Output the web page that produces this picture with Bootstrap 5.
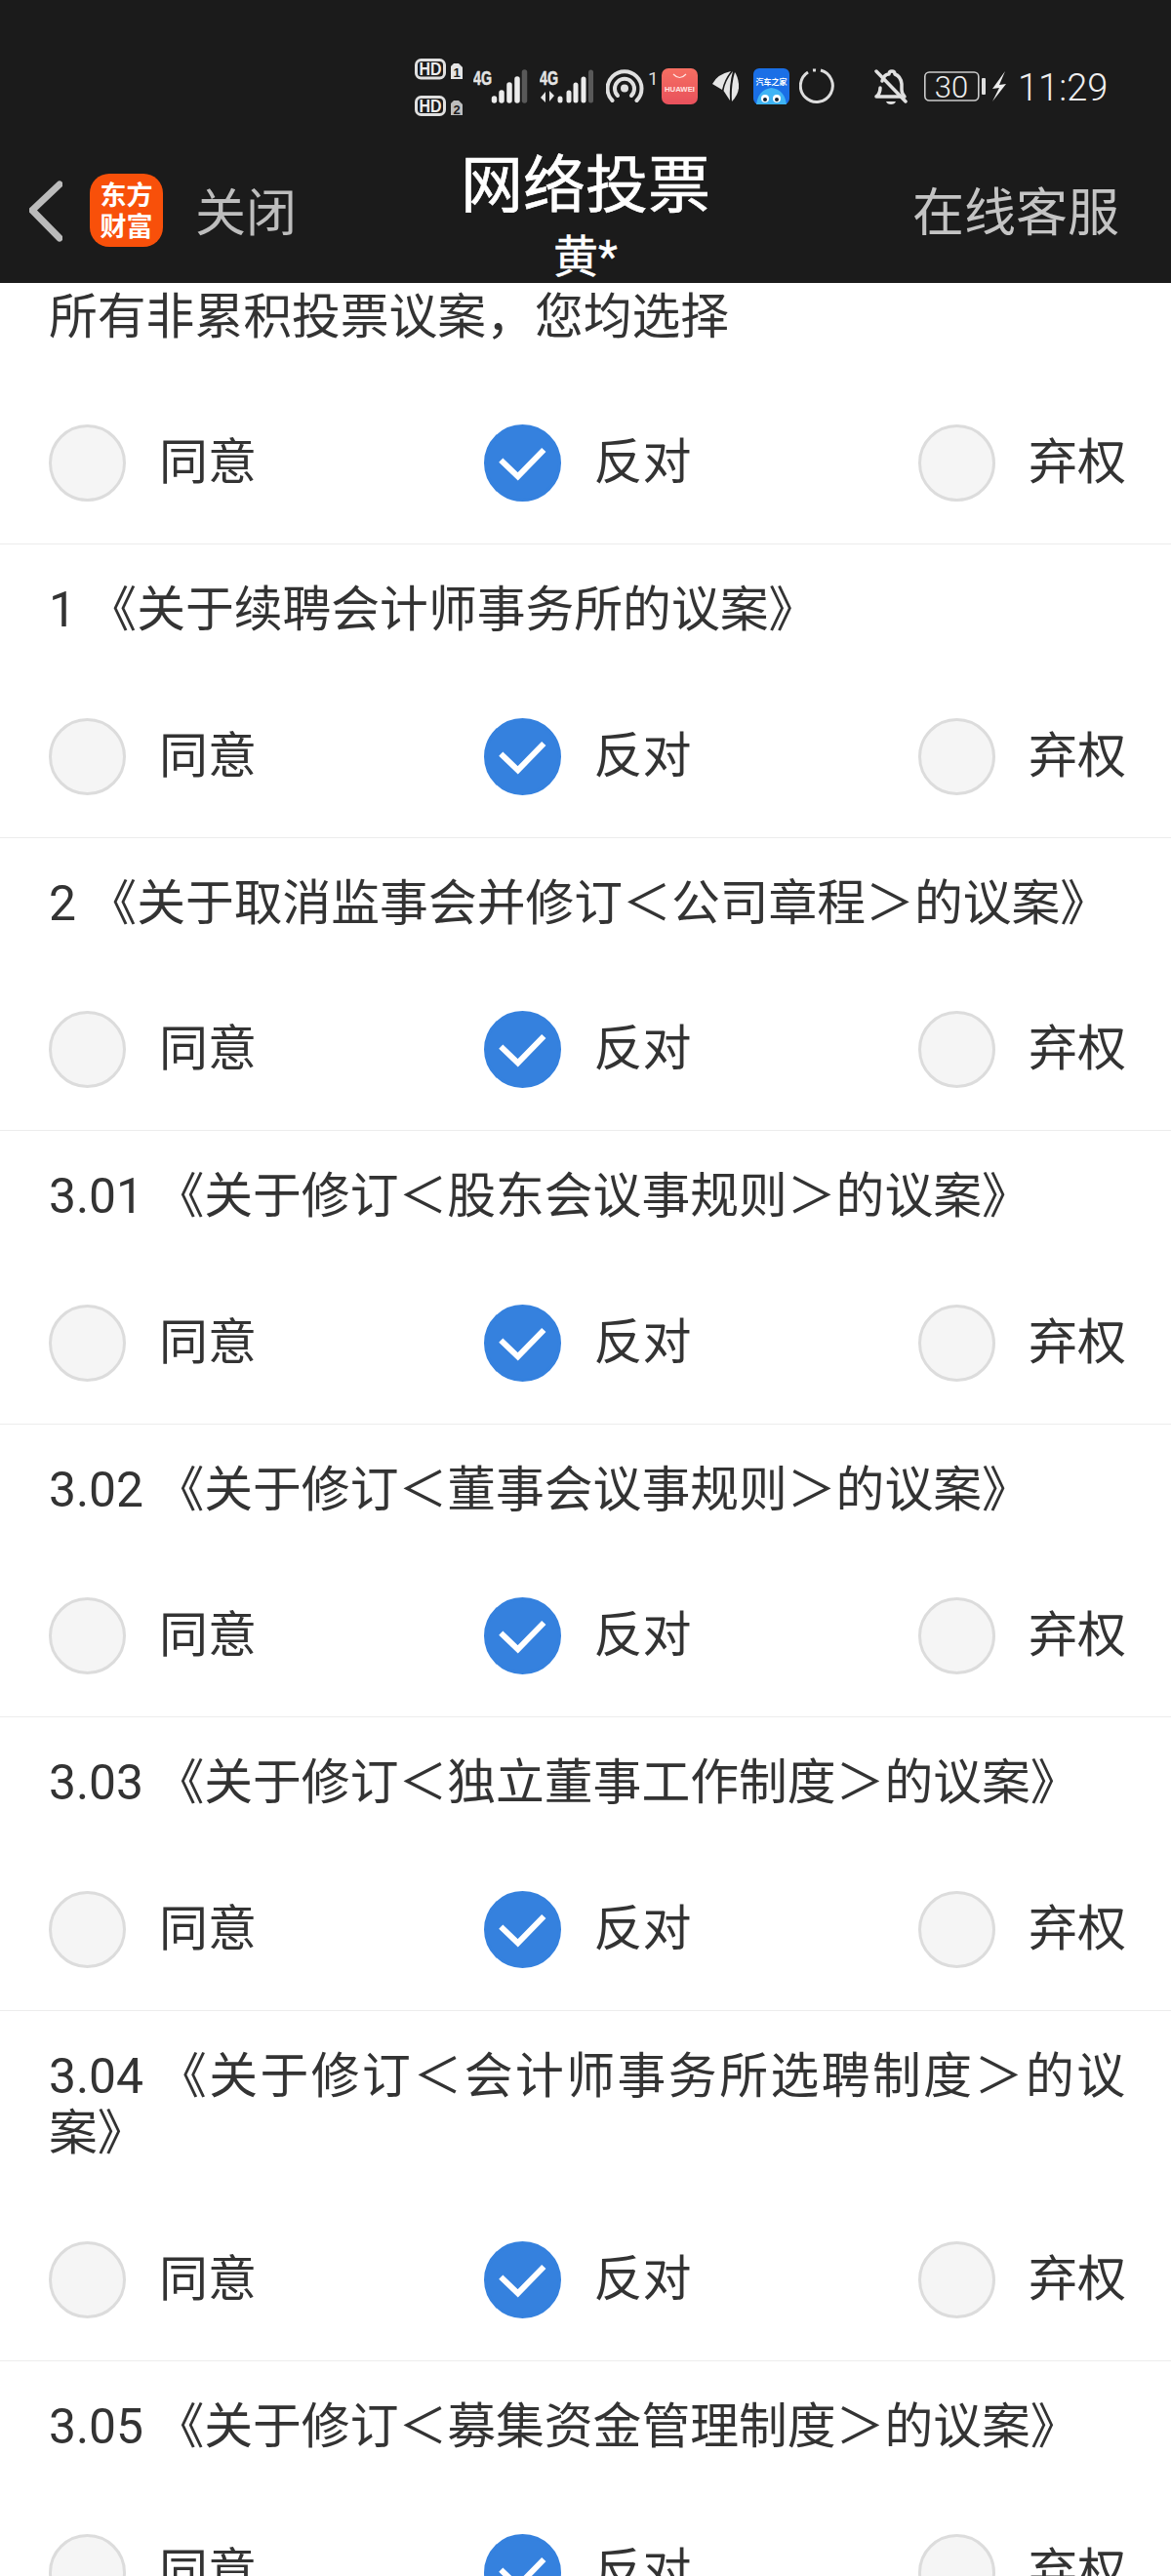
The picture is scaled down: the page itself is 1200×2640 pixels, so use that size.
<!DOCTYPE html>
<html lang="zh">

<head>
    <meta charset="UTF-8">
    <meta name="viewport" content="width=device-width, initial-scale=1.0">
    <link href="https://cdn.jsdelivr.net/npm/bootstrap@5.3.3/dist/css/bootstrap.min.css" rel="stylesheet">
    <script src="https://cdn.jsdelivr.net/npm/bootstrap@5.3.3/dist/js/bootstrap.bundle.min.js"></script>
    <title>网络投票</title>
    <style>
        html, body {
            height: 2640px;
            overflow: hidden;
        }
        body {
            font-family: Roboto, "Noto Sans CJK SC", sans-serif;
            background: #fff;
            color: #333;
        }
        .top-area {
            background: #1b1b1b;
            height: 290px;
            overflow: hidden;
        }
        .status-row {
            height: 140px;
            padding: 60px 67px 20px 0;
        }
        .status-row svg {
            height: 60px;
            display: block;
            flex: none;
        }
        .st-sig1 { width: 56px; margin-left: 11px; }
        .st-sig2 { width: 55px; margin-left: 12px; }
        .st-hot { width: 56px; margin-left: 13px; }
        .st-hw { width: 37px; margin-left: 1px; }
        .st-feather { width: 27px; margin-left: 15px; }
        .st-car { width: 37px; margin-left: 15px; }
        .st-ring { width: 36px; margin-left: 10px; }
        .st-bell { width: 34px; margin-left: 41px; }
        .st-batt { width: 63px; margin-left: 17px; }
        .st-bolt { width: 16px; margin-left: 7px; }
        .status-time {
            font-size: 38px;
            font-weight: 300;
            line-height: 60px;
            color: #eee;
            width: 90px;
            margin-left: 10px;
            white-space: nowrap;
        }
        .nav-row {
            display: grid;
            grid-template-columns: 1fr auto 1fr;
            height: 150px;
            overflow: hidden;
        }
        .nav-left {
            padding: 38px 0 0 30px;
        }
        .app-logo {
            width: 75px;
            height: 75px;
            border-radius: 20px;
            background: #f8500a;
            color: #fff;
            font-family: "Noto Sans CJK SC", sans-serif;
            font-size: 27px;
            font-weight: 700;
            line-height: 32px;
            text-align: center;
            padding-top: 5px;
            margin-left: 28px;
        }
        .nav-close {
            color: #bdbdbd;
            font-size: 52px;
            line-height: 75px;
            margin-left: 33px;
            padding-top: 4px;
        }
        .nav-title {
            color: #fff;
            text-align: center;
            padding-top: 15px;
        }
        .nav-title-main {
            font-size: 64px;
            line-height: 72px;
            -webkit-text-stroke: 0.6px #fff;
        }
        .nav-title-sub {
            font-size: 46px;
            line-height: 52px;
            margin-top: 10px;
            -webkit-text-stroke: 0.4px #fff;
        }
        .nav-service {
            color: #c4c4c4;
            font-size: 53px;
            line-height: 75px;
            text-align: right;
            padding: 42px 53px 0 0;
        }
        .vote-row {
            padding: 38.2px 47px 43px 50px;
            border-bottom: 1px solid #ececec;
        }
        .vote-row.first-row {
            padding-top: 5.9px;
        }
        .vote-title {
            font-size: 49.8px;
            line-height: 58.5px;
            margin-bottom: 80.8px;
            text-align: justify;
        }
        .vote-options {
            display: grid;
            grid-template-columns: 445.5px 445.5px 1fr;
        }
        .radio-dot {
            width: 79px;
            height: 79px;
            border-radius: 50%;
            background: #f5f5f5;
            border: 3px solid #dcdcdc;
            flex: none;
        }
        .radio-dot.checked {
            background: #3581de;
            border-color: #3581de;
        }
        .radio-dot svg {
            display: block;
            margin: -3px;
        }
        .vote-label {
            font-size: 50px;
            line-height: 79px;
            margin-left: 34px;
            white-space: nowrap;
        }
    </style>
</head>

<body>
    <div class="top-area">
        <div class="status-row d-flex justify-content-end">
            <svg width="49" viewBox="426 60 49 60">
                <g font-family="Liberation Sans, sans-serif" font-weight="700" text-anchor="middle">
                    <rect x="427.500" y="61.500" width="29" height="18.500" rx="5" fill="#1b1b1b" stroke="#e0e0e0" stroke-width="3"/>
                    <text x="442" y="77" font-size="18" fill="#eee" textLength="23" lengthAdjust="spacingAndGlyphs">HD</text>
                    <rect x="427.500" y="99.500" width="29" height="18" rx="5" fill="#1b1b1b" stroke="#e0e0e0" stroke-width="3"/>
                    <text x="442" y="115" font-size="18" fill="#eee" textLength="23" lengthAdjust="spacingAndGlyphs">HD</text>
                    <path d="M466 65h5l4 4v12h-12v-13z" fill="#e4e4e4"/>
                    <text x="469" y="79" font-size="13" fill="#1b1b1b">1</text>
                    <path d="M466 103h5l4 4v11h-12v-12z" fill="#bdbdbd"/>
                    <text x="469" y="116.500" font-size="13" fill="#1b1b1b">2</text>
                </g>
            </svg>
            <svg class="st-sig1" viewBox="487 60 56 60">
                <text x="487" y="87" font-family="Liberation Sans, sans-serif" font-weight="700" font-size="20" fill="#e4e4e4" stroke="#e4e4e4" stroke-width="0.500" textLength="19" lengthAdjust="spacingAndGlyphs">4G</text>
                <g stroke="#ececec" stroke-width="5.500" stroke-linecap="round">
                    <path d="M508.500 101v2M516 95v8M524 87v16M532 81v22"/>
                    <path d="M539.500 74v29" stroke="#595959"/>
                </g>
            </svg>
            <svg class="st-sig2" viewBox="554 60 55 60">
                <text x="554" y="87" font-family="Liberation Sans, sans-serif" font-weight="700" font-size="20" fill="#e4e4e4" stroke="#e4e4e4" stroke-width="0.500" textLength="19" lengthAdjust="spacingAndGlyphs">4G</text>
                <path d="M555 100l5-6v11zM569 98l-5 6v-11z" fill="#e4e4e4"/>
                <g stroke="#ececec" stroke-width="5" stroke-linecap="round">
                    <path d="M575 101v2M584 95v8M591 87v16M599 81v22"/>
                    <path d="M606.500 74v29" stroke="#595959"/>
                </g>
            </svg>
            <svg class="st-hot" viewBox="622 60 56 60">
                <g fill="none" stroke="#e0e0e0" stroke-width="4" stroke-linecap="round">
                    <path d="M628.500 103a17.500 17.500 0 1 1 25 0"/>
                    <path d="M634 98a10 10 0 1 1 14 0"/>
                </g>
                <circle cx="641" cy="90.500" r="4" fill="#e0e0e0"/>
                <text x="665" y="86.500" font-family="Roboto, sans-serif" font-size="19" fill="#ddd">1</text>
            </svg>
            <svg class="st-hw" viewBox="679 60 37 60">
                <defs>
                    <linearGradient id="hwGrad" x1="0" y1="0" x2="0" y2="1">
                        <stop offset="0" stop-color="#f66f62"/>
                        <stop offset="1" stop-color="#e8515c"/>
                    </linearGradient>
                </defs>
                <rect x="679" y="70" width="37" height="37" rx="7" fill="url(#hwGrad)"/>
                <path d="M691 76q6.500 7 13 0" fill="none" stroke="#ffe3e0" stroke-width="1.200"/>
                <text x="697.500" y="94" font-family="Liberation Sans, sans-serif" font-weight="700" font-size="8" fill="#ffe3e0" text-anchor="middle" textLength="31" lengthAdjust="spacingAndGlyphs">HUAWEI</text>
            </svg>
            <svg class="st-feather" viewBox="731 60 27 60">
                <g fill="#e6e6e6">
                    <path d="M750 73Q736 76 731 86L741 92Q743 82 750 73z"/>
                    <path d="M752 73Q744 83 742.500 93L749 103Q748 87 752 73z"/>
                    <path d="M754 74Q750 88 751 104Q759 96 758 86Q757 78 754 74z"/>
                </g>
            </svg>
            <svg class="st-car" viewBox="773 60 37 60">
                <rect x="773" y="70" width="37" height="37" rx="6" fill="#1a6fe6"/>
                <text x="791.500" y="87" font-family="Noto Sans CJK SC, sans-serif" font-weight="700" font-size="8" fill="#fff" text-anchor="middle">汽车之家</text>
                <path d="M776 107q2-15 15.500-17q13.500 2 15.500 17z" fill="#3fb4f5"/>
                <circle cx="785" cy="101" r="4" fill="#fff"/>
                <circle cx="797" cy="101" r="4" fill="#fff"/>
                <circle cx="785" cy="102" r="2" fill="#123"/>
                <circle cx="797" cy="102" r="2" fill="#123"/>
            </svg>
            <svg class="st-ring" viewBox="820 60 36 60">
                <path d="M842 72a16.500 16.500 0 1 1-13 2" fill="none" stroke="#ddd" stroke-width="3"/>
                <path d="M834 72a16.500 16.500 0 0 1 3 0" fill="none" stroke="#ddd" stroke-width="3"/>
            </svg>
            <svg class="st-bell" viewBox="897 60 34 60">
                <g fill="none" stroke="#e0e0e0" stroke-width="3.500" stroke-linecap="round" stroke-linejoin="round">
                    <path d="M905 83q2-7 7-7q0-3 3-3q3 0 3 3q6 2 7 10v6q0 4 3 7h-29q4-3 4-9"/>
                    <path d="M899 73l30 31"/>
                </g>
                <path d="M909 104h10q-1 3-5 3q-4 0-5-3z" fill="#e0e0e0"/>
            </svg>
            <svg class="st-batt" viewBox="948 60 63 60">
                <rect x="948.800" y="74" width="55" height="29" rx="4.500" fill="none" stroke="#ccc" stroke-width="1.600"/>
                <text x="976" y="99.500" font-family="Roboto, sans-serif" font-weight="300" font-size="31" fill="#eee" text-anchor="middle">30</text>
                <rect x="1007" y="80" width="4" height="17" rx="1" fill="#ddd"/>
            </svg>
            <svg class="st-bolt" viewBox="1018 60 16 60">
                <path d="M1031 73L1018 91L1025 90L1018 104L1032 86L1025 87z" fill="#eee"/>
            </svg>
            <div class="status-time">11:29</div>
        </div>
        <div class="nav-row">
            <div class="nav-left d-flex align-items-start">
                <svg width="34" height="75" viewBox="0 0 34 75">
                    <path d="M31 11L3 37.500L31 66" fill="none" stroke="#bbb" stroke-width="7" stroke-linecap="round" stroke-linejoin="miter"/>
                </svg>
                <div class="app-logo">东方<br>财富</div>
                <div class="nav-close">关闭</div>
            </div>
            <div class="nav-title">
                <div class="nav-title-main">网络投票</div>
                <div class="nav-title-sub">黄*</div>
            </div>
            <div class="nav-service">在线客服</div>
        </div>
    </div>

    <div id="list"></div>

    <script>
        var items = [
            '所有非累积投票议案，您均选择',
            '1 《关于续聘会计师事务所的议案》',
            '2 《关于取消监事会并修订＜公司章程＞的议案》',
            '3.01 《关于修订＜股东会议事规则＞的议案》',
            '3.02 《关于修订＜董事会议事规则＞的议案》',
            '3.03 《关于修订＜独立董事工作制度＞的议案》',
            '3.04 《关于修订＜会计师事务所选聘制度＞的议案》',
            '3.05 《关于修订＜募集资金管理制度＞的议案》'
        ];
        var check = '<svg width="79" height="79" viewBox="0 0 79 79"><path d="M17.300 36.700L34.700 53.300L61.300 26" fill="none" stroke="#fff" stroke-width="6"/></svg>';

        function option(label, on) {
            return '<div class="d-flex align-items-center">' +
                '<span class="radio-dot' + (on ? ' checked' : '') + '">' + (on ? check : '') + '</span>' +
                '<span class="vote-label">' + label + '</span></div>';
        }

        var html = '';
        items.forEach(function (t, i) {
            html += '<div class="vote-row' + (i === 0 ? ' first-row' : '') + '">' +
                '<div class="vote-title">' + t + '</div>' +
                '<div class="vote-options">' + option('同意') + option('反对', true) + option('弃权') + '</div></div>';
        });
        document.getElementById('list').innerHTML = html;
    </script>
</body>

</html>
